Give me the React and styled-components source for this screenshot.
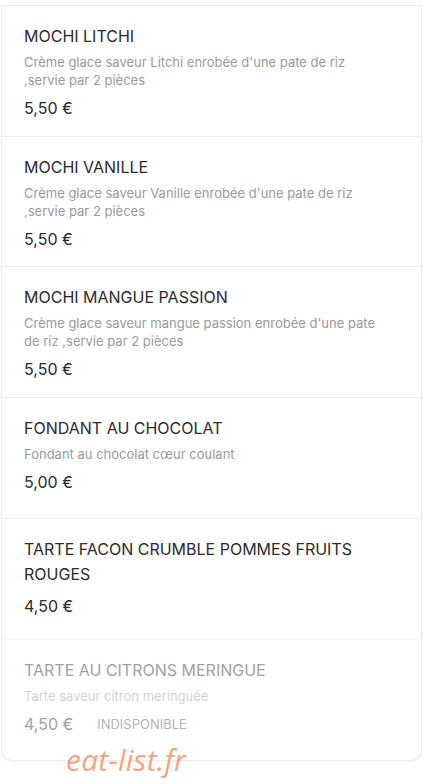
import styled, { createGlobalStyle } from "styled-components";

const GlobalStyle = createGlobalStyle`
  html, body {
    margin: 0;
    padding: 0;
    background: #ffffff;
  }
  body {
    font-family: Inter, "Noto Sans", "Liberation Sans", sans-serif;
    -webkit-font-smoothing: antialiased;
  }
`;

const Page = styled.div`
  position: relative;
  width: 424px;
  height: 784px;
  overflow: hidden;
  padding-top: 5px;
  box-sizing: border-box;
`;

const Card = styled.div`
  margin: 0 2px 0 1px;
  background: #fff;
  border: 1px solid #ebebeb;
  border-top: none;
  border-radius: 0 0 12px 12px;
  box-shadow: 0 1px 3px rgba(0, 0, 0, 0.06);
`;

const Item = styled.div`
  min-height: 121px;
  box-sizing: border-box;
  padding: 18px 40px 15.5px 22px;
  border-top: 1.5px solid #ececec;
  opacity: ${(p) => (p.$disabled ? 0.45 : 1)};
`;

const Title = styled.div`
  font-size: 16px;
  line-height: 25px;
  color: #2b2b2b;
  text-transform: uppercase;
`;

const Desc = styled.div`
  margin-top: 4px;
  font-size: 13px;
  line-height: 18px;
  color: #9a9a9a;
`;

const PriceRow = styled.div`
  display: flex;
  align-items: center;
  gap: 24px;
  margin-top: 7px;
`;

const Price = styled.span`
  font-size: 16px;
  line-height: 24px;
  color: #2b2b2b;
`;

const Badge = styled.span`
  font-size: 13px;
  line-height: 24px;
  color: #555;
  text-transform: uppercase;
`;

const Watermark = styled.div`
  position: absolute;
  left: 66px;
  top: 739px;
  font-family: "Open Sans", "Noto Sans", sans-serif;
  font-style: italic;
  font-size: 30px;
  color: #f3a47e;
  letter-spacing: 0.2px;
`;

const items = [
  {
    name: "MOCHI LITCHI",
    desc: "Crème glace saveur Litchi enrobée d'une pate de riz ,servie par 2 pièces",
    price: "5,50 €",
  },
  {
    name: "MOCHI VANILLE",
    desc: "Crème glace saveur Vanille enrobée d'une pate de riz ,servie par 2 pièces",
    price: "5,50 €",
  },
  {
    name: "MOCHI MANGUE PASSION",
    desc: "Crème glace saveur mangue passion enrobée d'une pate de riz ,servie par 2 pièces",
    price: "5,50 €",
  },
  {
    name: "FONDANT AU CHOCOLAT",
    desc: "Fondant au chocolat cœur coulant",
    price: "5,00 €",
  },
  {
    name: "TARTE FACON CRUMBLE POMMES FRUITS ROUGES",
    price: "4,50 €",
  },
  {
    name: "TARTE AU CITRONS MERINGUE",
    desc: "Tarte saveur citron meringuée",
    price: "4,50 €",
    unavailable: true,
  },
];

export default function App() {
  return (
    <Page>
      <GlobalStyle />
      <Card>
        {items.map((it) => (
          <Item key={it.name} $disabled={it.unavailable}>
            <Title>{it.name}</Title>
            {it.desc && <Desc>{it.desc}</Desc>}
            <PriceRow>
              <Price>{it.price}</Price>
              {it.unavailable && <Badge>Indisponible</Badge>}
            </PriceRow>
          </Item>
        ))}
      </Card>
      <Watermark>eat-list.fr</Watermark>
    </Page>
  );
}
